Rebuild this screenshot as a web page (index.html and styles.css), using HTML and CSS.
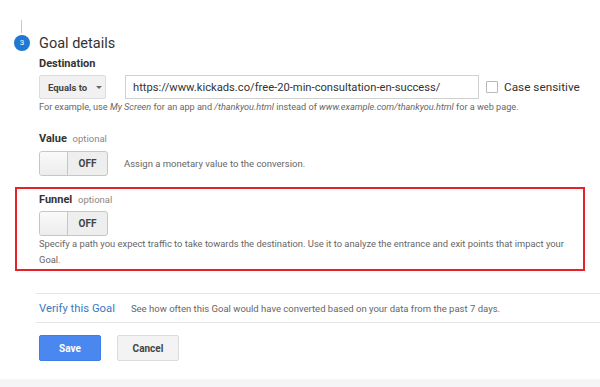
FILE: index.html
```html
<!DOCTYPE html>
<html lang="en">
<head>
    <meta charset="UTF-8">
    <title>Goal details</title>
    <link rel="stylesheet" href="styles.css">
</head>
<body>
    <div class="page">
        <!-- Step header -->
        <div class="step-line"></div>
        <div class="step-head">
            <span class="step-num">3</span>
            <h2 class="step-title">Goal details</h2>
        </div>

        <!-- Destination -->
        <div class="section">
            <div class="label">Destination</div>
            <div class="dest-row">
                <button type="button" class="select-btn">Equals to <span class="caret"></span></button>
                <input type="text" class="dest-input" value="https://www.kickads.co/free-20-min-consultation-en-success/">
                <span class="checkbox"></span>
                <span class="check-label">Case sensitive</span>
            </div>
            <div class="help">For example, use <i>My Screen</i> for an app and <i>/thankyou.html</i> instead of <i>www.example.com/thankyou.html</i> for a web page.</div>
        </div>

        <!-- Value -->
        <div class="section value">
            <div class="label">Value <span class="optional">optional</span></div>
            <div class="toggle-row">
                <div class="toggle"><span class="knob"></span><span class="off">OFF</span></div>
                <span class="toggle-note">Assign a monetary value to the conversion.</span>
            </div>
        </div>

        <!-- Funnel (highlighted) -->
        <div class="highlight">
            <div class="label">Funnel <span class="optional">optional</span></div>
            <div class="toggle"><span class="knob"></span><span class="off">OFF</span></div>
            <p class="funnel-text">Specify a path you expect traffic to take towards the destination. Use it to analyze the entrance and exit points that impact your Goal.</p>
        </div>

        <!-- Verify -->
        <div class="verify">
            <a href="#" class="verify-link">Verify this Goal</a>
            <span class="verify-note">See how often this Goal would have converted based on your data from the past 7 days.</span>
        </div>

        <div class="actions">
            <button type="button" class="btn btn-save">Save</button>
            <button type="button" class="btn btn-cancel">Cancel</button>
        </div>
    </div>
    <div class="footer-band"></div>
</body>
</html>
```

FILE: styles.css
```css
body {
    margin: 0;
    background-color: #ffffff;
    color: #333333;
    font-family: Roboto, "Liberation Sans", Arial, sans-serif;
}

.page {
    padding-top: 20px;
    padding-bottom: 18px;
}

/* Step marker */
.step-line {
    width: 1px;
    height: 13px;
    margin-left: 21px;
    background-color: #c8c8c8;
}

.step-head {
    display: flex;
    align-items: center;
    height: 20px;
}

.step-num {
    width: 16px;
    height: 16px;
    margin-left: 14px;
    margin-right: 9px;
    border-radius: 50%;
    background-color: #1f78d1;
    color: #ffffff;
    font-size: 8px;
    line-height: 16px;
    text-align: center;
}

.step-title {
    margin: 0;
    font-size: 14.5px;
    font-weight: normal;
    color: #333333;
}

.section {
    padding-left: 39px;
}

.label {
    font-size: 11px;
    font-weight: bold;
    color: #333333;
    line-height: 16px;
}

.section .label {
    margin-top: 3px;
}

.optional {
    margin-left: 3px;
    font-size: 9.5px;
    font-weight: normal;
    color: #888888;
}

/* Destination row */
.dest-row {
    display: flex;
    align-items: center;
    margin-top: 3px;
}

.select-btn {
    width: 67px;
    height: 24px;
    padding: 0 0 0 8px;
    border: 1px solid #dcdcdc;
    border-radius: 2px;
    background-color: #f1f1f1;
    color: #444444;
    font-family: inherit;
    font-size: 9.5px;
    font-weight: bold;
    text-align: left;
}

.caret {
    display: inline-block;
    margin-left: 6px;
    border-left: 3px solid transparent;
    border-right: 3px solid transparent;
    border-top: 3px solid #666666;
    vertical-align: middle;
}

.dest-input {
    width: 354px;
    height: 24px;
    margin-left: 19px;
    padding: 0 7px;
    box-sizing: border-box;
    border: 1px solid #d0d0d0;
    border-radius: 0;
    color: #333333;
    font-family: inherit;
    font-size: 11.2px;
}

.checkbox {
    width: 10px;
    height: 10px;
    margin-left: 7px;
    border: 1px solid #b8b8b8;
    border-radius: 1px;
}

.check-label {
    margin-left: 6px;
    font-size: 11.8px;
    color: #333333;
}

.help {
    margin-top: 3px;
    font-size: 9.15px;
    color: #666666;
}

/* Toggles */
.value {
    margin-top: 19px;
}

.toggle-row {
    display: flex;
    align-items: center;
    margin-top: 4px;
}

.toggle {
    display: flex;
    width: 69px;
    height: 25px;
    box-sizing: border-box;
    border: 1px solid #c6c6c6;
    border-radius: 3px;
    background-color: #eeeeee;
    overflow: hidden;
}

.knob {
    width: 27px;
    border-right: 1px solid #c6c6c6;
    background: linear-gradient(#fafafa, #ececec);
}

.off {
    flex: 1;
    font-size: 10px;
    font-weight: bold;
    color: #444444;
    line-height: 23px;
    text-align: center;
}

.toggle-note {
    margin-left: 16px;
    font-size: 9.5px;
    color: #666666;
}

/* Red highlight box */
.highlight {
    width: 570px;
    margin: 11px 0 0 15px;
    padding: 3px 10px 1px 22px;
    box-sizing: border-box;
    border: 2px solid #e8202a;
}

.highlight .toggle {
    margin-top: 3px;
}

.funnel-text {
    margin: 0;
    font-size: 9.4px;
    line-height: 16px;
    color: #666666;
}

/* Verify */
.verify {
    display: flex;
    align-items: center;
    height: 28px;
    margin: 22px 0 0 36px;
    padding-left: 3px;
    border-top: 1px solid #e6e6e6;
    border-bottom: 1px solid #e6e6e6;
}

.verify-link {
    color: #3b78c4;
    font-size: 11.3px;
    text-decoration: none;
}

.verify-note {
    margin-left: 16px;
    font-size: 9.5px;
    color: #666666;
}

.actions {
    display: flex;
    gap: 16px;
    margin: 12px 0 0 39px;
}

.btn {
    width: 62px;
    height: 26px;
    border-radius: 2px;
    font-family: inherit;
    font-size: 10px;
    font-weight: bold;
}

.btn-save {
    border: 1px solid #3d7ee8;
    background-color: #4a88ef;
    color: #ffffff;
}

.btn-cancel {
    border: 1px solid #dcdcdc;
    background-color: #f3f3f3;
    color: #444444;
}

.footer-band {
    height: 27px;
    background-color: #f5f5f7;
}
```
